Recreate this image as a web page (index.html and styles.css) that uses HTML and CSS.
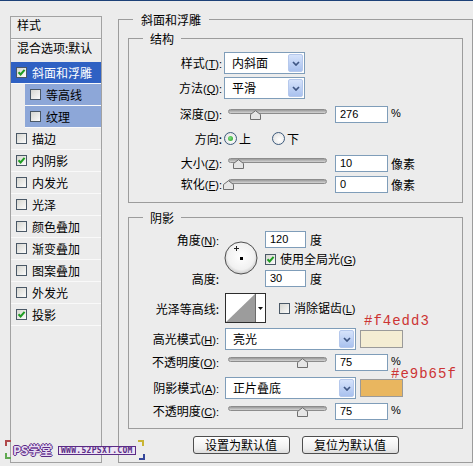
FILE: index.html
```html
<!DOCTYPE html>
<html lang="zh-CN">
<head>
<meta charset="utf-8">
<title>图层样式 - 斜面和浮雕</title>
<link rel="stylesheet" href="styles.css">
</head>
<body>
<div class="topbar"></div>
<div class="dialog">
  <aside class="style-list">
    <div class="list-head">样式</div>
    <div class="list-blend">混合选项:默认</div>
    <div class="item selected"><span class="cb"><svg width="9" height="9" viewBox="0 0 9 9"><path d="M1.5 4.3 L3.6 6.5 L7.6 1.8" fill="none" stroke="#1f9c22" stroke-width="2"/></svg></span>斜面和浮雕</div>
    <div class="item sub"><span class="cb"></span>等高线</div>
    <div class="item sub"><span class="cb"></span>纹理</div>
    <div class="item"><span class="cb"></span>描边</div>
    <div class="item"><span class="cb"><svg width="9" height="9" viewBox="0 0 9 9"><path d="M1.5 4.3 L3.6 6.5 L7.6 1.8" fill="none" stroke="#1f9c22" stroke-width="2"/></svg></span>内阴影</div>
    <div class="item"><span class="cb"></span>内发光</div>
    <div class="item"><span class="cb"></span>光泽</div>
    <div class="item"><span class="cb"></span>颜色叠加</div>
    <div class="item"><span class="cb"></span>渐变叠加</div>
    <div class="item"><span class="cb"></span>图案叠加</div>
    <div class="item"><span class="cb"></span>外发光</div>
    <div class="item"><span class="cb"><svg width="9" height="9" viewBox="0 0 9 9"><path d="M1.5 4.3 L3.6 6.5 L7.6 1.8" fill="none" stroke="#1f9c22" stroke-width="2"/></svg></span>投影</div>
  </aside>

  <section class="group outer">
    <div class="group-title outer-title">斜面和浮雕</div>

    <div class="group structure">
      <div class="group-title inner-title">结构</div>

      <div class="row row-select first">
        <span class="lbl lbl-s">样式<span class="lat">(<u>T</u>):</span></span>
        <div class="select sel-s"><span class="select-text">内斜面</span><span class="drop"><svg width="8" height="5" viewBox="0 0 8 5"><path d="M1 1 L4 4 L7 1" fill="none" stroke="#3f5683" stroke-width="1.7"/></svg></span></div>
      </div>
      <div class="row row-select second">
        <span class="lbl lbl-s">方法<span class="lat">(<u>Q</u>):</span></span>
        <div class="select sel-s"><span class="select-text">平滑</span><span class="drop"><svg width="8" height="5" viewBox="0 0 8 5"><path d="M1 1 L4 4 L7 1" fill="none" stroke="#3f5683" stroke-width="1.7"/></svg></span></div>
      </div>
      <div class="row row-field depth">
        <span class="lbl lbl-s">深度<span class="lat">(<u>D</u>):</span></span>
        <div class="slider s-left"><div class="track"></div><svg class="thumb" style="left:22px" width="11" height="10" viewBox="0 0 11 10"><path d="M0.5 4.5 L5.5 0.7 L10.5 4.5 L10.5 9.5 L0.5 9.5 Z" fill="#e6e6e6" stroke="#6f6f6f"/></svg></div>
        <div class="field">276</div><span class="unit pct lat">%</span>
      </div>
      <div class="row row-field direction">
        <span class="lbl lbl-s">方向:</span>
        <span class="radio on"></span><span class="radio-text">上</span>
        <span class="radio second-radio"></span><span class="radio-text">下</span>
      </div>
      <div class="row row-field size">
        <span class="lbl lbl-s">大小<span class="lat">(<u>Z</u>):</span></span>
        <div class="slider s-left"><div class="track"></div><svg class="thumb" style="left:5px" width="11" height="10" viewBox="0 0 11 10"><path d="M0.5 4.5 L5.5 0.7 L10.5 4.5 L10.5 9.5 L0.5 9.5 Z" fill="#e6e6e6" stroke="#6f6f6f"/></svg></div>
        <div class="field">10</div><span class="unit">像素</span>
      </div>
      <div class="row row-field soften">
        <span class="lbl lbl-s">软化<span class="lat">(<u>F</u>):</span></span>
        <div class="slider s-left"><div class="track"></div><svg class="thumb" style="left:-5px" width="11" height="10" viewBox="0 0 11 10"><path d="M0.5 4.5 L5.5 0.7 L10.5 4.5 L10.5 9.5 L0.5 9.5 Z" fill="#e6e6e6" stroke="#6f6f6f"/></svg></div>
        <div class="field">0</div><span class="unit">像素</span>
      </div>
    </div>

    <div class="group shading">
      <div class="group-title inner-title">阴影</div>

      <div class="angle-block">
        <div class="angle-labels">
          <span class="lbl-line">角度<span class="lat">(<u>N</u>):</span></span>
          <span class="lbl-line">高度:</span>
        </div>
        <svg class="dial" width="34" height="34" viewBox="0 0 34 34">
          <defs>
            <radialGradient id="dialfill" cx="50%" cy="45%" r="55%">
              <stop offset="0" stop-color="#ffffff"/>
              <stop offset="0.75" stop-color="#f1f1f1"/>
              <stop offset="1" stop-color="#c9c9c9"/>
            </radialGradient>
          </defs>
          <circle cx="17" cy="17" r="16" fill="url(#dialfill)" stroke="#505050"/>
          <path d="M12.5 5 V10 M10 7.5 H15" stroke="#222" stroke-width="1"/>
          <rect x="16" y="16" width="3" height="3" fill="#000"/>
        </svg>
        <div class="angle-fields">
          <div class="af-row"><div class="field small">120</div><span class="unit-deg">度</span></div>
          <div class="af-mid"><span class="cb"><svg width="9" height="9" viewBox="0 0 9 9"><path d="M1.5 4.3 L3.6 6.5 L7.6 1.8" fill="none" stroke="#1f9c22" stroke-width="2"/></svg></span><span class="cb-text">使用全局光<span class="lat">(<u>G</u>)</span></span></div>
          <div class="af-row"><div class="field small">30</div><span class="unit-deg">度</span></div>
        </div>
      </div>

      <div class="row contour-row">
        <span class="lbl lbl-g">光泽等高线:</span>
        <div class="contour">
          <svg class="contour-graph" width="29" height="28" viewBox="0 0 29 28"><rect width="29" height="28" fill="#fff"/><path d="M0 28 L29 0 L29 28 Z" fill="#9c9c9c"/></svg>
          <span class="contour-drop"><svg width="5" height="3" viewBox="0 0 5 3"><path d="M0 0 H5 L2.5 3 Z" fill="#111"/></svg></span>
        </div>
        <span class="cb aa"></span><span class="cb-text">消除锯齿<span class="lat">(<u>L</u>)</span></span>
      </div>

      <div class="row row-select mode1">
        <span class="lbl lbl-g">高光模式<span class="lat">(<u>H</u>):</span></span>
        <div class="select sel-l"><span class="select-text">亮光</span><span class="drop"><svg width="8" height="5" viewBox="0 0 8 5"><path d="M1 1 L4 4 L7 1" fill="none" stroke="#3f5683" stroke-width="1.7"/></svg></span></div>
        <span class="swatch" style="background:#f4edd3"></span>
      </div>
      <div class="row row-field opac1">
        <span class="lbl lbl-g">不透明度<span class="lat">(<u>O</u>):</span></span>
        <div class="slider s-right"><div class="track"></div><svg class="thumb" style="left:69px" width="11" height="10" viewBox="0 0 11 10"><path d="M0.5 4.5 L5.5 0.7 L10.5 4.5 L10.5 9.5 L0.5 9.5 Z" fill="#e6e6e6" stroke="#6f6f6f"/></svg></div>
        <div class="field">75</div><span class="unit pct lat">%</span>
      </div>
      <div class="row row-select mode2">
        <span class="lbl lbl-g">阴影模式<span class="lat">(<u>A</u>):</span></span>
        <div class="select sel-l"><span class="select-text">正片叠底</span><span class="drop"><svg width="8" height="5" viewBox="0 0 8 5"><path d="M1 1 L4 4 L7 1" fill="none" stroke="#3f5683" stroke-width="1.7"/></svg></span></div>
        <span class="swatch" style="background:#e9b65f"></span>
      </div>
      <div class="row row-field opac2">
        <span class="lbl lbl-g">不透明度<span class="lat">(<u>C</u>):</span></span>
        <div class="slider s-right"><div class="track"></div><svg class="thumb" style="left:69px" width="11" height="10" viewBox="0 0 11 10"><path d="M0.5 4.5 L5.5 0.7 L10.5 4.5 L10.5 9.5 L0.5 9.5 Z" fill="#e6e6e6" stroke="#6f6f6f"/></svg></div>
        <div class="field">75</div><span class="unit pct lat">%</span>
      </div>
    </div>

    <div class="buttons">
      <button class="btn" type="button">设置为默认值</button>
      <button class="btn" type="button">复位为默认值</button>
    </div>
  </section>
</div>

<div class="note note-1">#f4edd3</div>
<div class="note note-2">#e9b65f</div>

<div class="watermark">
  <span class="wm-corner wm-tl"></span>
  <span class="wm-corner wm-bl"></span>
  <span class="wm-corner wm-tr"></span>
  <span class="wm-corner wm-br"></span>
  <span class="wm-ps">PS学堂</span>
  <span class="wm-url">WWW.52PSXT.COM</span>
</div>
</body>
</html>
```
FILE: styles.css
```css
html, body {
  margin: 0;
  padding: 0;
}
body {
  width: 473px;
  height: 466px;
  overflow: hidden;
  position: relative;
  background: #ececec;
  color: #000;
  font-family: "Noto Sans CJK SC", "Liberation Sans", sans-serif;
  font-size: 12px;
  line-height: 15px;
}
.lat {
  font-family: "Liberation Sans", "DejaVu Sans", sans-serif;
  font-size: 11px;
}
.lat u {
  text-decoration: underline;
  text-underline-offset: 1px;
}

.topbar {
  height: 1px;
  background: #1d4178;
}

.dialog {
  display: flex;
  align-items: flex-start;
  padding-left: 10px;
}

/* ---------- left style list ---------- */
.style-list {
  margin-top: 15px;
  width: 92px;
  height: 447px;
  box-sizing: border-box;
  border: 1px solid #a2a2a2;
  flex: none;
}
.list-head {
  height: 21px;
  line-height: 15px;
  padding-left: 6px;
  border-bottom: 1px solid #a2a2a2;
  box-shadow: 0 1px 0 #fbfbfb;
  margin-bottom: 1px;
}
.list-blend {
  height: 22px;
  line-height: 16px;
  padding-left: 6px;
}
.item {
  height: 21px;
  border-bottom: 1px solid #f9f9f9;
  display: flex;
  align-items: center;
  gap: 5px;
  padding-left: 5px;
  white-space: nowrap;
}
.item.selected {
  background: #2f61c3;
  color: #fff;
}
.item.sub {
  margin-left: 14px;
  background: #8da7d8;
}

.cb {
  width: 11px;
  height: 11px;
  box-sizing: border-box;
  border: 1px solid #4a5866;
  background: linear-gradient(135deg, #d6d6d0, #fbfbfb);
  flex: none;
  display: flex;
  align-items: center;
  justify-content: center;
}
.cb svg {
  display: block;
}

/* ---------- group boxes ---------- */
.group {
  box-sizing: border-box;
  border: 1px solid #9c9c9c;
}
.group-title {
  width: max-content;
  margin-top: -8px;
  line-height: 15px;
  background: #ececec;
  white-space: nowrap;
}
.outer {
  margin-left: 16px;
  margin-top: 18px;
  width: 355px;
  height: 444px;
  padding: 0 9px;
  flex: none;
}
.outer-title {
  margin-left: 5px;
  padding: 0 8px;
}
.inner-title {
  margin-left: 14px;
  padding: 0 7px;
}
.structure {
  margin-top: 11px;
  height: 165px;
}
.shading {
  margin-top: 14px;
  height: 212px;
}

/* ---------- rows ---------- */
.row {
  display: flex;
  align-items: center;
  white-space: nowrap;
}
.row-select { height: 22px; }
.row-field { height: 17px; }
.lbl {
  flex: none;
  text-align: right;
}
.lbl-s { width: 93px; }
.lbl-g { width: 90px; }

.structure .first { margin-top: 6px; }
.structure .second { margin-top: 3px; }
.structure .depth { margin-top: 7px; }
.structure .direction { margin-top: 7px; }
.structure .size { margin-top: 8px; }
.structure .soften { margin-top: 4px; }

/* select */
.select {
  display: flex;
  align-items: stretch;
  height: 22px;
  box-sizing: border-box;
  border: 1px solid #7f9db9;
  background: #fff;
  padding: 1px;
  margin-left: 2px;
  flex: none;
}
.sel-s { width: 81px; }
.sel-l { width: 131px; margin-left: 6px; }
.select-text {
  flex: 1;
  padding-left: 6px;
  line-height: 18px;
}
.drop {
  width: 15px;
  box-sizing: border-box;
  border: 1px solid #b5c8ec;
  border-radius: 2px;
  background: linear-gradient(#d6e3fb, #a9c1ee);
  display: flex;
  align-items: center;
  justify-content: center;
}
.drop svg { display: block; }

/* slider */
.slider {
  position: relative;
  width: 99px;
  height: 17px;
  flex: none;
}
.s-left { margin-left: 6px; }
.s-right { margin-left: 9px; }
.track {
  margin-top: 3px;
  height: 5px;
  box-sizing: border-box;
  border: 1px solid #8c8c8c;
  border-radius: 3px;
  background: linear-gradient(#9a9a9a, #d4d4d4);
}
.thumb {
  position: absolute;
  top: 4px;
  display: block;
}

/* text field */
.field {
  width: 53px;
  height: 17px;
  box-sizing: border-box;
  border: 1px solid #7f9db9;
  background: #fff;
  margin-left: 8px;
  padding-left: 4px;
  font-family: "Liberation Sans", "DejaVu Sans", sans-serif;
  font-size: 11px;
  line-height: 15px;
  flex: none;
}
.field.small {
  width: 41px;
  margin-left: 0;
}
.unit {
  margin-left: 3px;
}
.unit.pct {
  align-self: flex-start;
  line-height: 12px;
  margin-top: 1px;
}

/* radio */
.radio {
  width: 13px;
  height: 13px;
  box-sizing: border-box;
  border: 1px solid #3c5a7c;
  border-radius: 50%;
  background: radial-gradient(circle at 60% 60%, #ffffff, #dcdcdc);
  margin-left: 2px;
  flex: none;
  display: flex;
  align-items: center;
  justify-content: center;
}
.radio.on::after {
  content: "";
  width: 5px;
  height: 5px;
  border-radius: 50%;
  background: radial-gradient(circle at 40% 40%, #7fe07f, #1f9a22);
}
.radio.second-radio { margin-left: 21px; }
.radio-text { margin-left: 2px; }

/* angle block */
.angle-block {
  display: flex;
  margin-top: 6px;
  height: 56px;
}
.angle-labels {
  width: 90px;
  flex: none;
  display: flex;
  flex-direction: column;
  justify-content: space-between;
  align-items: flex-end;
  white-space: nowrap;
}
.lbl-line {
  line-height: 17px;
}
.dial {
  margin-left: 5px;
  margin-top: 10px;
  display: block;
  flex: none;
}
.angle-fields {
  margin-left: 7px;
  display: flex;
  flex-direction: column;
}
.af-row {
  display: flex;
  align-items: center;
  height: 17px;
}
.unit-deg { margin-left: 4px; }
.af-mid {
  height: 22px;
  display: flex;
  align-items: center;
  white-space: nowrap;
}
.cb-text { margin-left: 4px; }

/* contour row */
.contour-row {
  margin-top: 6px;
  height: 30px;
}
.contour {
  margin-left: 6px;
  width: 41px;
  height: 30px;
  box-sizing: border-box;
  border: 1px solid #2d2d2d;
  background: #fff;
  display: flex;
  flex: none;
}
.contour-graph { display: block; }
.contour-drop {
  flex: 1;
  border-left: 1px solid #6b6b6b;
  display: flex;
  align-items: center;
  justify-content: center;
}
.contour-drop svg { display: block; }
.cb.aa { margin-left: 13px; }

.shading .mode1 { margin-top: 5px; }
.shading .opac1 { margin-top: 4px; }
.shading .mode2 { margin-top: 6px; }
.shading .opac2 { margin-top: 4px; }

.swatch {
  width: 43px;
  height: 18px;
  box-sizing: border-box;
  border: 1px solid #9a9a9a;
  margin-left: 4px;
  flex: none;
}

/* buttons */
.buttons {
  display: flex;
  justify-content: center;
  gap: 12px;
  margin-top: 7px;
}
.btn {
  width: 97px;
  height: 18px;
  box-sizing: border-box;
  padding: 0;
  border: 1px solid #4e4e4e;
  border-radius: 3px;
  background: linear-gradient(#ffffff, #efefef 70%, #dcdcdc);
  font-family: "Noto Sans CJK SC", sans-serif;
  font-size: 12px;
  line-height: 16px;
  color: #000;
}

/* red annotations over the dialog */
.note {
  position: absolute;
  font-family: "Liberation Mono", "DejaVu Sans Mono", monospace;
  font-size: 14px;
  line-height: 14px;
  letter-spacing: 1px;
  color: #cc3434;
}
.note-1 { left: 364px; top: 314px; }
.note-2 { left: 391px; top: 367px; }

/* watermark */
.watermark {
  position: absolute;
  left: 5px;
  top: 439px;
  width: 140px;
  height: 22px;
}
.wm-corner {
  position: absolute;
  width: 4px;
  height: 4px;
}
.wm-tl { left: 0; top: 1px; border-left: 2px solid #b0484a; border-top: 2px solid #b0484a; }
.wm-bl { left: 0; top: 14px; border-left: 2px solid #5fa850; border-bottom: 2px solid #5fa850; }
.wm-tr { left: 133px; top: 1px; border-right: 2px solid #c9b534; border-top: 2px solid #c9b534; }
.wm-br { left: 134px; top: 15px; border-right: 2px solid #34469a; border-bottom: 2px solid #34469a; }
.wm-ps {
  position: absolute;
  left: 8px;
  top: 4px;
  font-family: "Noto Sans CJK SC", sans-serif;
  font-size: 12px;
  font-weight: bold;
  line-height: 14px;
  color: #e7dcf2;
  text-shadow: 1px 0 0 #5b2b86, -1px 0 0 #5b2b86, 0 1px 0 #5b2b86, 0 -1px 0 #5b2b86;
}
.wm-url {
  position: absolute;
  left: 53px;
  top: 7px;
  height: 9px;
  box-sizing: border-box;
  padding: 0 2px;
  border: 1px solid #5b2b86;
  background: #ece4f4;
  color: #5b2b86;
  font-family: "DejaVu Sans Mono", monospace;
  font-size: 8px;
  font-weight: bold;
  line-height: 7px;
  letter-spacing: 0.3px;
  white-space: nowrap;
}
```
